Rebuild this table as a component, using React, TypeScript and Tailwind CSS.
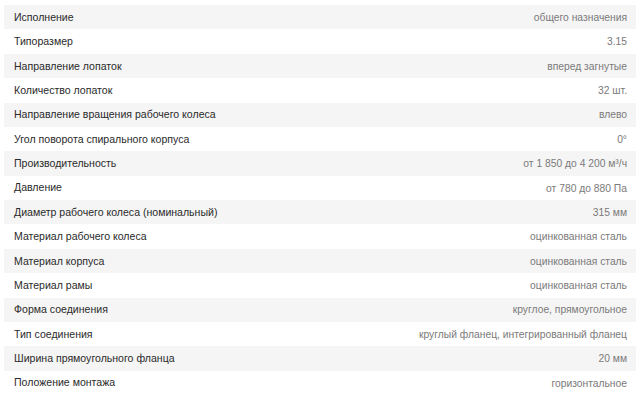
import React from "react";

const rows: [string, React.ReactNode][] = [
  ["Исполнение", "общего назначения"],
  ["Типоразмер", "3.15"],
  ["Направление лопаток", "вперед загнутые"],
  ["Количество лопаток", "32 шт."],
  ["Направление вращения рабочего колеса", "влево"],
  ["Угол поворота спирального корпуса", "0°"],
  ["Производительность", <>от 1 850 до 4 200 м³/ч</>],
  ["Давление", "от 780 до 880 Па"],
  ["Диаметр рабочего колеса (номинальный)", "315 мм"],
  ["Материал рабочего колеса", "оцинкованная сталь"],
  ["Материал корпуса", "оцинкованная сталь"],
  ["Материал рамы", "оцинкованная сталь"],
  ["Форма соединения", "круглое, прямоугольное"],
  ["Тип соединения", "круглый фланец, интегрированный фланец"],
  ["Ширина прямоугольного фланца", "20 мм"],
  ["Положение монтажа", "горизонтальное"],
];

export default function App() {
  return (
    <div
      className="w-[640px] h-[398px] bg-white pt-[5px] px-[4px] overflow-hidden"
      style={{ fontFamily: '"Liberation Sans", Arial, sans-serif' }}
    >
      {rows.map(([k, v], i) => (
        <div
          key={i}
          className={`h-[24.375px] flex items-center justify-between pl-[10px] pr-[9px] pt-[1px] ${
            i % 2 === 0 ? "bg-[#f5f5f5]" : "bg-white"
          }`}
        >
          <span className="text-[10.55px] text-[#2a2a2a]">{k}</span>
          <span className="text-[10.3px] text-[#7a7a7a]">{v}</span>
        </div>
      ))}
    </div>
  );
}
